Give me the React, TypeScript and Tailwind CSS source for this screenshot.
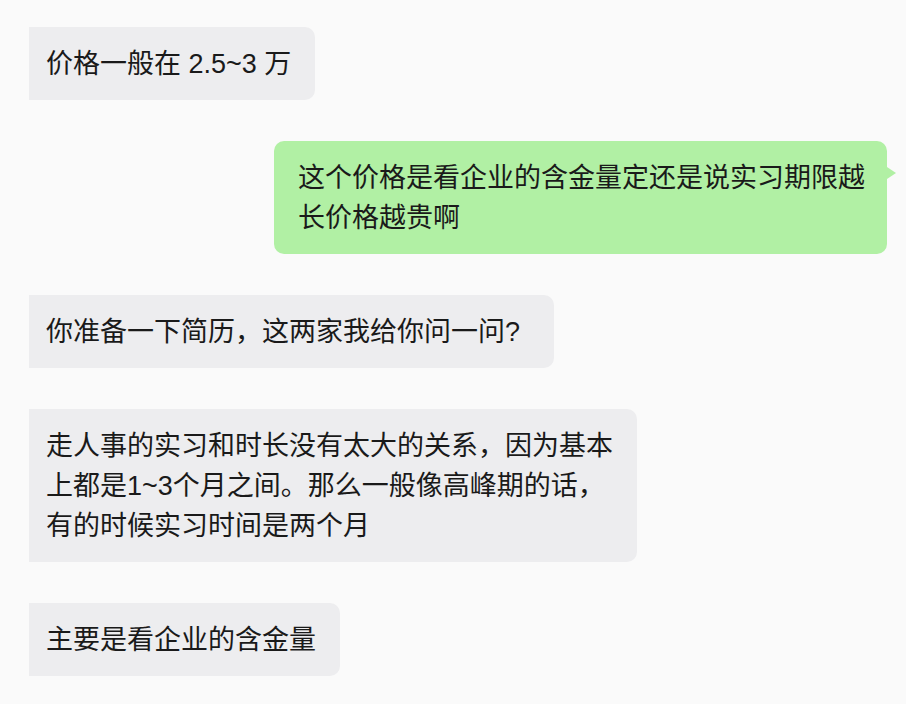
import React from 'react';

type Msg = { from: 'them' | 'me'; lines: string[]; wide?: boolean };

const messages: Msg[] = [
  { from: 'them', lines: ['价格一般在 2.5~3 万'] },
  { from: 'me', lines: ['这个价格是看企业的含金量定还是说实习期限越', '长价格越贵啊'] },
  { from: 'them', lines: ['你准备一下简历，这两家我给你问一问?'], wide: true },
  {
    from: 'them',
    lines: ['走人事的实习和时长没有太大的关系，因为基本', '上都是1~3个月之间。那么一般像高峰期的话，', '有的时候实习时间是两个月'],
  },
  { from: 'them', lines: ['主要是看企业的含金量'] },
];

function Bubble({ msg }: { msg: Msg }) {
  const text = msg.lines.map((l, i) => (
    <React.Fragment key={i}>
      {i > 0 && <br />}
      {l}
    </React.Fragment>
  ));

  if (msg.from === 'me') {
    return (
      <div className="relative mr-[19px] self-end rounded-[10px] bg-[#b1f0a4] py-[16.5px] pl-[24px] pr-[22px]">
        {text}
        {/* tail */}
        <span className="absolute right-[-9px] top-[26px] h-0 w-0 border-y-[6px] border-l-[9px] border-y-transparent border-l-[#b1f0a4]" />
      </div>
    );
  }

  return (
    <div
      className={`ml-[29px] self-start rounded-r-[10px] bg-[#ededef] py-[16.5px] pl-[17px] ${
        msg.wide ? 'pr-[34px]' : 'pr-[24px]'
      }`}
    >
      {text}
    </div>
  );
}

export default function App() {
  return (
    <div className="min-h-screen w-full bg-[#fafafa] font-['Liberation_Sans','Noto_Sans_CJK_SC',sans-serif] text-[27px] leading-[40px] text-[#1a1a1a]">
      <div className="flex flex-col gap-[41px] pt-[27px]">
        {messages.map((m, i) => (
          <Bubble key={i} msg={m} />
        ))}
      </div>
    </div>
  );
}
